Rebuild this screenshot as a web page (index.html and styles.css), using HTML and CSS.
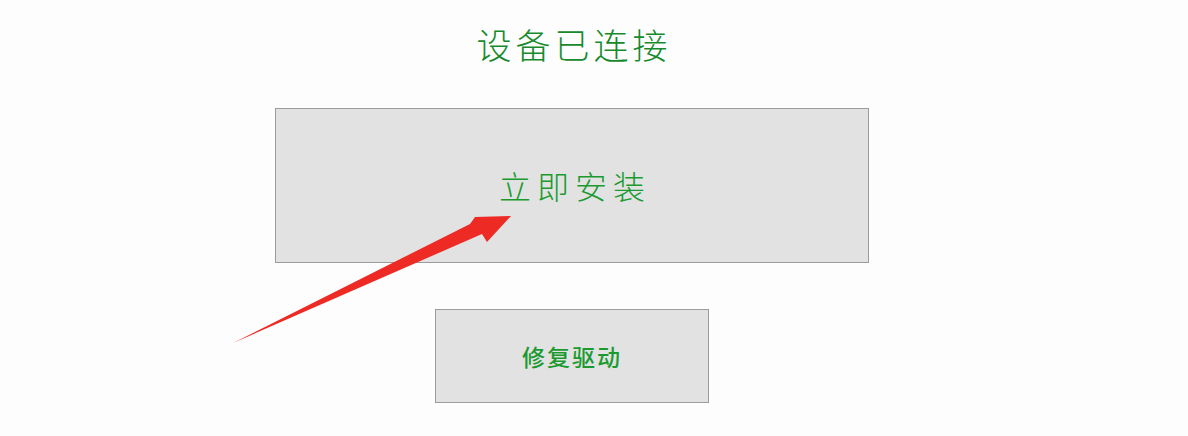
FILE: index.html
```html
<!DOCTYPE html>
<html lang="zh-CN">
<head>
    <meta charset="UTF-8">
    <title>设备已连接</title>
    <link rel="stylesheet" href="styles.css">
</head>
<body>
    <div class="page">
        <h1 class="title">设备已连接</h1>
        <div class="btn btn-install">立即安装</div>
        <div class="btn btn-repair">修复驱动</div>

        <!-- red arrow pointing at the install button -->
        <svg class="arrow" width="1188" height="436" viewBox="0 0 1188 436">
            <polygon points="233,343 470,224 475,217 511,216 487,242 482,234" fill="#ee2a24"/>
        </svg>
    </div>
</body>
</html>
```

FILE: styles.css
```css
*{
    margin: 0;
    padding: 0;
    box-sizing: border-box;
}
body{
    width: 1188px;
    height: 436px;
    background: #fdfdfe;
    font-family: "Noto Sans CJK SC", sans-serif;
    overflow: hidden;
}
.page{
    width: 1144px;
    height: 436px;
    display: flex;
    flex-direction: column;
    align-items: center;
    padding-top: 26px;
    position: relative;
}
.title{
    font-size: 35px;
    font-weight: 300;
    line-height: 36px;
    letter-spacing: 4px;
    color: #178a2c;
    margin-left: 4px;
}
.btn{
    display: flex;
    align-items: center;
    justify-content: center;
    background: #e2e2e3;
    border: 1px solid #9c9c9c;
    color: #1b9a30;
}
.btn-install{
    width: 594px;
    height: 155px;
    margin-top: 46px;
    font-size: 32px;
    font-weight: 300;
    letter-spacing: 6px;
    padding-left: 6px;
    padding-bottom: 2px;
}
.btn-repair{
    width: 274px;
    height: 94px;
    margin-top: 46px;
    font-size: 23px;
    font-weight: 500;
    letter-spacing: 2px;
}
.arrow{
    position: absolute;
    top: 0;
    left: 0;
}
```
